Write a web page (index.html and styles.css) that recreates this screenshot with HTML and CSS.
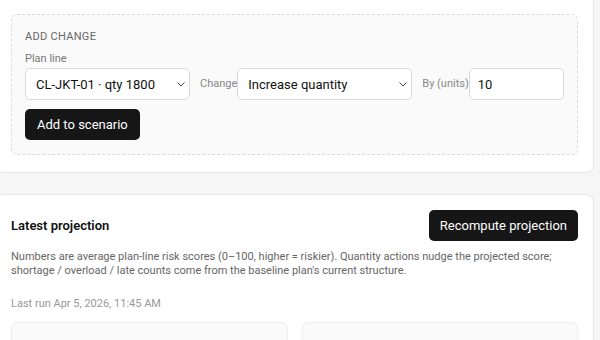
FILE: index.html
```html
<!DOCTYPE html>
<html lang="en">

<head>
  <meta charset="UTF-8">
  <meta name="viewport" content="width=device-width, initial-scale=1.0">
  <title>Scenario</title>
  <link rel="stylesheet" href="styles.css">
</head>

<body>
  <div class="page">
    <section class="card card-top">
      <div class="add-change">
        <div class="section-label">ADD CHANGE</div>
        <div class="change-row">
          <div class="field">
            <label for="planLine">Plan line</label>
            <select id="planLine" class="control plan-select">
              <option>CL-JKT-01 · qty 1800</option>
            </select>
          </div>
          <label class="inline-label" for="changeType">Change</label>
          <select id="changeType" class="control change-select">
            <option>Increase quantity</option>
          </select>
          <label class="inline-label" for="units">By (units)</label>
          <input id="units" class="control units-input" type="text" value="10">
        </div>
        <button class="btn">Add to scenario</button>
      </div>
    </section>

    <section class="card card-projection">
      <div class="projection-head">
        <h2>Latest projection</h2>
        <button class="btn">Recompute projection</button>
      </div>
      <p class="note">Numbers are average plan-line risk scores (0–100, higher = riskier). Quantity actions nudge the projected score; shortage / overload / late counts come from the baseline plan's current structure.</p>
      <p class="last-run">Last run Apr 5, 2026, 11:45 AM</p>
      <div class="result-grid">
        <div class="result-box"></div>
        <div class="result-box"></div>
      </div>
    </section>
  </div>
</body>

</html>
```

FILE: styles.css
```css
body {
  margin: 0;
  background: #f6f6f6;
  font-family: Roboto, "Noto Sans", sans-serif;
  color: #111;
  overflow: hidden;
}

.page {
  margin: -20px 6px 0 -5px;
}

.card {
  background: white;
  border: 1px solid #e6e6e6;
  border-radius: 8px;
  padding: 15px 15px 16px 15px;
}

.card-top {
  padding-top: 33px;
  padding-bottom: 17px;
}

.card-projection {
  margin-top: 21px;
}

/* dashed box for the change form */
.add-change {
  background: #fafafa;
  border: 1px dashed #dcdcdc;
  border-radius: 6px;
  padding: 15px 13px 14px 13px;
}

.section-label {
  font-size: 11px;
  letter-spacing: 0.3px;
  color: #666;
  margin-bottom: 9px;
}

.change-row {
  display: flex;
  align-items: flex-end;
}

.field label {
  display: block;
  font-size: 11px;
  color: #777;
  margin-bottom: 3px;
}

.control {
  font-family: inherit;
  font-size: 13px;
  color: #111;
  height: 32px;
  background: white;
  border: 1px solid #d9d9d9;
  border-radius: 5px;
  padding: 0 8px;
  box-sizing: border-box;
  flex-shrink: 0;
}

select.control {
  appearance: none;
  -webkit-appearance: none;
  padding-left: 10px;
  background-image: url("data:image/svg+xml,%3Csvg xmlns='http://www.w3.org/2000/svg' width='8' height='5' viewBox='0 0 8 5'%3E%3Cpath d='M0.5 0.5 L4 4 L7.5 0.5' fill='none' stroke='%23444' stroke-width='1'/%3E%3C/svg%3E");
  background-repeat: no-repeat;
  background-position: right 4px center;
}

.plan-select {
  width: 165px;
}

.change-select {
  width: 175px;
}

.units-input {
  width: 95px;
}

.inline-label {
  font-size: 11px;
  color: #888;
  height: 32px;
  line-height: 32px;
  margin-left: 10px;
  white-space: nowrap;
  flex-shrink: 0;
}

.btn {
  font-family: inherit;
  font-size: 13px;
  color: white;
  background: #161616;
  border: none;
  border-radius: 5px;
  height: 31px;
  padding: 0 12px;
  cursor: pointer;
}

.add-change .btn {
  margin-top: 9px;
}

.projection-head {
  display: flex;
  justify-content: space-between;
  align-items: center;
}

.projection-head h2 {
  font-size: 13px;
  font-weight: 600;
  margin: 0;
}

.projection-head .btn {
  padding: 0 11px;
}

.note {
  font-size: 11px;
  line-height: 14px;
  color: #666;
  margin: 9px 0 0 0;
}

.last-run {
  font-size: 11px;
  color: #999;
  margin: 19px 0 0 0;
}

.result-grid {
  display: grid;
  grid-template-columns: 1fr 1fr;
  gap: 14px;
  margin-top: 12px;
}

.result-box {
  height: 80px;
  background: #fafafa;
  border: 1px solid #eee;
  border-radius: 6px;
}
```
